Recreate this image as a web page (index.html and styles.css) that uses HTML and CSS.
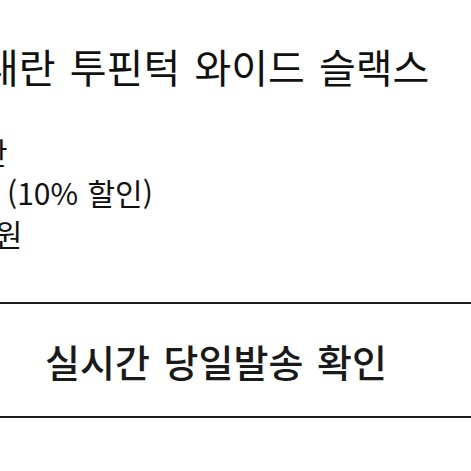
FILE: index.html
```html
<!DOCTYPE html>
<html lang="ko">
<head>
<meta charset="utf-8">
<link rel="stylesheet" href="styles.css">
</head>
<body>
<div class="page">
  <h1 class="title">내란 투핀턱 와이드 슬랙스</h1>
  <div class="info">
    <p class="line l1">산</p>
    <p class="line l2">원 (10% 할인)</p>
    <p class="line l3">0원</p>
  </div>
  <div class="cta">실시간 당일발송 확인</div>
</div>
</body>
</html>
```
FILE: styles.css
```css
html, body {
  margin: 0;
  padding: 0;
  background: #ffffff;
  overflow: hidden;
}
.page {
  width: 471px;
  height: 471px;
  font-family: "Noto Sans CJK KR", "Noto Sans", sans-serif;
  color: #111111;
}
.title {
  margin: 0;
  padding-top: 41px;
  font-size: 40px;
  line-height: 50px;
  font-weight: 400;
  white-space: nowrap;
  text-indent: -18px;
  word-spacing: 3px;
}
.info {
  margin-top: 40px;
}
.line {
  margin: 0;
  font-size: 30px;
  line-height: 41px;
  white-space: nowrap;
}
.l1 { text-indent: -20px; }
.l2 { text-indent: -30px; word-spacing: 1px; }
.l3 { text-indent: -22px; }
.cta {
  margin-top: 48px;
  border-top: 2px solid #1e1e1e;
  border-bottom: 2px solid #1e1e1e;
  height: 112px;
  display: flex;
  align-items: center;
  padding-left: 45px;
  font-size: 38px;
  font-weight: 500;
  color: #1a1a1a;
  white-space: nowrap;
  word-spacing: 3px;
}
```
